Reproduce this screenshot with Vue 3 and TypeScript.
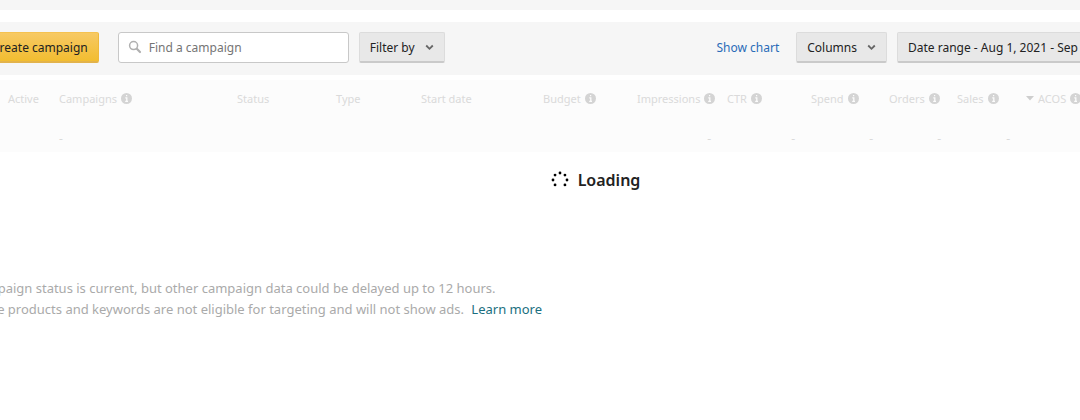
<script setup lang="ts">
interface Column {
  key: string
  label: string
  width: number
  info?: boolean
  sorted?: boolean
  value?: string
  numeric?: boolean
}

const columns: Column[] = [
  { key: 'active', label: 'Active', width: 51 },
  { key: 'campaigns', label: 'Campaigns', width: 178, info: true, value: '-' },
  { key: 'status', label: 'Status', width: 99 },
  { key: 'type', label: 'Type', width: 85 },
  { key: 'start', label: 'Start date', width: 122 },
  { key: 'budget', label: 'Budget', width: 94, info: true },
  { key: 'impressions', label: 'Impressions', width: 90, info: true, value: '-', numeric: true },
  { key: 'ctr', label: 'CTR', width: 84, info: true, value: '-', numeric: true },
  { key: 'spend', label: 'Spend', width: 78, info: true, value: '-', numeric: true },
  { key: 'orders', label: 'Orders', width: 68, info: true, value: '-', numeric: true },
  { key: 'sales', label: 'Sales', width: 69, info: true, value: '-', numeric: true },
  { key: 'acos', label: 'ACOS', width: 90, info: true, sorted: true },
]

const dots = [0, 1, 2, 3, 4, 5, 6, 7].map((i) => {
  const angle = (i * Math.PI) / 4
  return { x: 9 + 7 * Math.sin(angle), y: 9 - 7 * Math.cos(angle), on: i !== 4 }
}).filter((dot) => dot.on)
</script>

<template>
  <main class="page">
    <div class="top-strip"></div>
    <header class="toolbar">
      <button type="button" class="btn primary">Create campaign</button>
      <label class="search">
        <svg width="14" height="14" viewBox="0 0 14 14" aria-hidden="true">
          <circle cx="5.6" cy="5.6" r="4" fill="none" stroke="#b0b0b0" stroke-width="1.5" />
          <path d="M8.8 8.8 12 12" stroke="#b0b0b0" stroke-width="2.2" stroke-linecap="round" />
        </svg>
        <input type="search" placeholder="Find a campaign" aria-label="Find a campaign" />
      </label>
      <button type="button" class="btn">
        Filter by
        <svg class="chevron" width="9" height="7" viewBox="0 0 9 7" aria-hidden="true"><path d="M1.2 1.5 4.5 4.8 7.8 1.5" /></svg>
      </button>
      <a href="#" class="chart-link">Show chart</a>
      <button type="button" class="btn">
        Columns
        <svg class="chevron" width="9" height="7" viewBox="0 0 9 7" aria-hidden="true"><path d="M1.2 1.5 4.5 4.8 7.8 1.5" /></svg>
      </button>
      <button type="button" class="btn range">Date range - Aug 1, 2021 - Sep</button>
    </header>

    <div class="table-wrap">
      <table>
        <colgroup>
          <col v-for="col in columns" :key="col.key" :style="{ width: col.width + 'px' }" />
        </colgroup>
        <thead>
          <tr>
            <th v-for="col in columns" :key="col.key" scope="col">
              <span class="head">
                <svg v-if="col.sorted" class="sort" width="8" height="5" viewBox="0 0 8 5" aria-hidden="true"><path d="M0 0H8L4 4.5Z" /></svg>
                {{ col.label }}
                <svg v-if="col.info" class="info" width="11" height="11" viewBox="0 0 11 11" aria-hidden="true">
                  <circle cx="5.5" cy="5.5" r="5.5" />
                  <path d="M4.3 4.8H5.8V8.2M4.2 8.3H7M5 2.7H6.2" />
                </svg>
              </span>
            </th>
          </tr>
        </thead>
        <tbody>
          <tr>
            <td v-for="col in columns" :key="col.key" :class="{ numeric: col.numeric }">{{ col.value }}</td>
          </tr>
        </tbody>
      </table>
    </div>

    <div class="loading" role="status">
      <svg width="18" height="18" viewBox="0 0 18 18" aria-hidden="true">
        <circle v-for="(dot, i) in dots" :key="i" :cx="dot.x" :cy="dot.y" r="1.4" />
      </svg>
      Loading
    </div>

    <footer class="notes">
      <p>Campaign status is current, but other campaign data could be delayed up to 12 hours.</p>
      <p>Some products and keywords are not eligible for targeting and will not show ads. <a href="#">Learn more</a></p>
    </footer>
  </main>
</template>

<style>
html,
body {
  background: #fff;
  overflow-x: hidden;
}
</style>

<style scoped>
.page {
  overflow: hidden;
  font-family: "Noto Sans", "Open Sans", sans-serif;
  font-size: 12px;
  color: #222;
}
.top-strip {
  height: 10px;
  background: #f6f6f6;
}
.toolbar {
  display: flex;
  align-items: center;
  box-sizing: border-box;
  height: 53px;
  margin-top: 12px;
  padding-bottom: 3px;
  background: #f6f6f6;
  white-space: nowrap;
}
.btn {
  flex: none;
  display: flex;
  align-items: center;
  gap: 10px;
  box-sizing: border-box;
  height: 31px;
  margin: 0 0 0 10px;
  padding: 1px 10px 0;
  border: 1px solid #dcdcdc;
  border-bottom: 2px solid #cacaca;
  border-radius: 2px;
  background: #e8e8e8;
  color: #222;
  font: inherit;
}
.primary {
  margin-left: -19px;
  border-color: #f5c250 #efb93c #e3b34a;
  background: linear-gradient(#f7c964, #f2bd30);
}
.chevron {
  fill: none;
  stroke: #666;
  stroke-width: 1.8;
}
.search {
  display: flex;
  align-items: center;
  gap: 7px;
  box-sizing: border-box;
  flex: 0 0 231px;
  height: 31px;
  margin-left: 19px;
  padding: 0 9px;
  border: 1px solid #c8c8c8;
  border-radius: 3px;
  background: #fff;
}
.search input {
  flex: 1;
  min-width: 0;
  padding: 0;
  border: 0;
  outline: 0;
  background: none;
  font: inherit;
  color: #222;
}
.search input::placeholder {
  color: #757575;
  opacity: 1;
}
.chart-link {
  margin-left: auto;
  margin-right: 7px;
  color: #2a6cb8;
  text-decoration: none;
}
.range {
  width: 193px;
  margin-right: -10px;
}
.table-wrap {
  margin-top: 5px;
  padding-left: 8px;
  overflow: hidden;
  background: #fcfcfc;
}
table {
  table-layout: fixed;
  width: 1108px;
  border-collapse: collapse;
}
th,
td {
  padding: 0;
  text-align: left;
  font-weight: 400;
  color: #dadada;
  white-space: nowrap;
}
th {
  height: 36px;
  font-size: 11px;
}
td {
  height: 28px;
  padding-top: 8px;
}
.numeric {
  padding-right: 16px;
  text-align: right;
}
.head {
  display: flex;
  align-items: center;
  gap: 4px;
}
.sort {
  fill: #cecece;
}
.info {
  fill: #d4d4d4;
}
.info path {
  fill: none;
  stroke: #fcfcfc;
  stroke-width: 1.3;
}
.loading {
  display: flex;
  align-items: center;
  justify-content: center;
  gap: 9px;
  margin-top: 16px;
  padding-left: 111px;
  font-size: 16px;
  line-height: 24px;
  font-weight: 600;
}
.notes {
  margin: 86px 0 0 -30px;
  font-size: 13px;
  line-height: 21px;
  color: #aaa;
  white-space: nowrap;
}
.notes p {
  margin: 0;
}
.notes a {
  margin-left: 4px;
  color: #1b6f80;
  text-decoration: none;
}
</style>
